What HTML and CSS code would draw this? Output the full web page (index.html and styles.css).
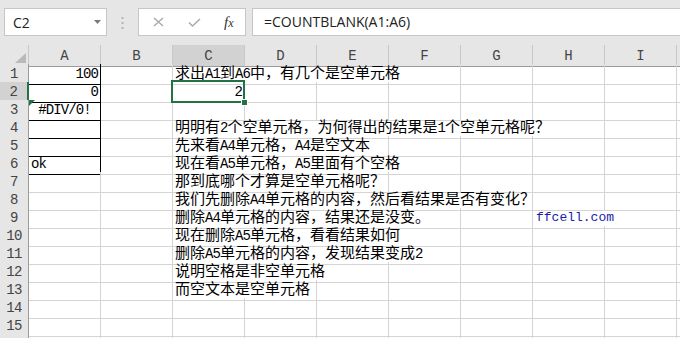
FILE: index.html
```html
<!DOCTYPE html>
<html lang="zh-CN">
<head>
<meta charset="UTF-8">
<title>COUNTBLANK</title>
<link rel="stylesheet" href="styles.css">
</head>
<body>
<div class="toolbar">
  <div class="namebox">
    <span>C2</span>
    <svg class="dd" width="7" height="4" viewBox="0 0 7 4"><path d="M0 0h7L3.5 4z"/></svg>
  </div>
  <svg class="grip" width="3" height="12" viewBox="0 0 3 12"><rect x="0.5" y="0" width="2" height="2"/><rect x="0.5" y="5" width="2" height="2"/><rect x="0.5" y="10" width="2" height="2"/></svg>
  <div class="fbtns">
    <svg class="ico" width="11" height="10" viewBox="0 0 11 10"><path d="M1 1l9 8M10 1l-9 8"/></svg>
    <svg class="ico" width="13" height="9" viewBox="0 0 13 9"><path d="M1 4.5l3.5 3.5L12 1"/></svg>
    <span class="fx">f<small>x</small></span>
  </div>
  <div class="finput">=COUNTBLANK(A1:A6)</div>
</div>

<div class="sheet">
  <div class="row head">
    <div class="corner"><svg width="11" height="10" viewBox="0 0 11 10"><path d="M11 0v10H0z"/></svg></div>
    <div>A</div><div>B</div><div class="on">C</div><div>D</div><div>E</div><div>F</div><div>G</div><div>H</div><div>I</div><div></div>
  </div>
  <div class="row">
    <div class="rh">1</div><div class="box num">100</div><div></div>
    <div class="txt span4">求出<span class="en">A1</span>到<span class="en">A6</span>中，有几个是空单元格</div>
    <div></div><div></div><div></div><div></div>
  </div>
  <div class="row">
    <div class="rh on">2</div><div class="box num">0</div><div></div>
    <div class="num sel">2</div>
    <div></div><div></div><div></div><div></div><div></div><div></div><div></div>
  </div>
  <div class="row">
    <div class="rh">3</div><div class="box err">#DIV/0!</div><div></div>
    <div></div><div></div><div></div><div></div><div></div><div></div><div></div><div></div>
  </div>
  <div class="row">
    <div class="rh">4</div><div class="box"></div><div></div>
    <div class="txt span6">明明有<span class="en">2</span>个空单元格，为何得出的结果是<span class="en">1</span>个空单元格呢？</div>
    <div></div><div></div>
  </div>
  <div class="row">
    <div class="rh">5</div><div class="box"></div><div></div>
    <div class="txt span3">先来看<span class="en">A4</span>单元格，<span class="en">A4</span>是空文本</div>
    <div></div><div></div><div></div><div></div><div></div>
  </div>
  <div class="row">
    <div class="rh">6</div><div class="box mono">ok</div><div></div>
    <div class="txt span4">现在看<span class="en">A5</span>单元格，<span class="en">A5</span>里面有个空格</div>
    <div></div><div></div><div></div><div></div>
  </div>
  <div class="row">
    <div class="rh">7</div><div></div><div></div>
    <div class="txt span3">那到底哪个才算是空单元格呢？</div>
    <div></div><div></div><div></div><div></div><div></div>
  </div>
  <div class="row">
    <div class="rh">8</div><div></div><div></div>
    <div class="txt span5">我们先删除<span class="en">A4</span>单元格的内容，然后看结果是否有变化？</div>
    <div></div><div></div><div></div>
  </div>
  <div class="row">
    <div class="rh">9</div><div></div><div></div>
    <div class="txt span4">删除<span class="en">A4</span>单元格的内容，结果还是没变。</div>
    <div></div><div class="link span2">ffcell.com</div><div></div>
  </div>
  <div class="row">
    <div class="rh">10</div><div></div><div></div>
    <div class="txt span4">现在删除<span class="en">A5</span>单元格，看看结果如何</div>
    <div></div><div></div><div></div><div></div>
  </div>
  <div class="row">
    <div class="rh">11</div><div></div><div></div>
    <div class="txt span4">删除<span class="en">A5</span>单元格的内容，发现结果变成<span class="en">2</span></div>
    <div></div><div></div><div></div><div></div>
  </div>
  <div class="row">
    <div class="rh">12</div><div></div><div></div>
    <div class="txt span3">说明空格是非空单元格</div>
    <div></div><div></div><div></div><div></div><div></div>
  </div>
  <div class="row">
    <div class="rh">13</div><div></div><div></div>
    <div class="txt span2">而空文本是空单元格</div>
    <div></div><div></div><div></div><div></div><div></div><div></div>
  </div>
  <div class="row">
    <div class="rh">14</div><div></div><div></div><div></div><div></div><div></div><div></div><div></div><div></div><div></div><div></div>
  </div>
  <div class="row">
    <div class="rh">15</div><div></div><div></div><div></div><div></div><div></div><div></div><div></div><div></div><div></div><div></div>
  </div>
  <div class="row">
    <div class="rh"></div><div></div><div></div><div></div><div></div><div></div><div></div><div></div><div></div><div></div><div></div>
  </div>
</div>
</body>
</html>
```

FILE: styles.css
```css
body {
  margin: 0;
  background: #fff;
  font-family: "Noto Sans CJK SC", sans-serif;
  overflow: hidden;
}

/* formula bar */
.toolbar {
  height: 45px;
  background: #e6e6e6;
  display: flex;
  align-items: flex-start;
  padding-top: 8px;
  box-sizing: border-box;
}
.namebox {
  margin-left: 4px;
  width: 103px;
  height: 28px;
  background: #fff;
  border: 1px solid #c6c6c6;
  box-sizing: border-box;
  display: flex;
  align-items: center;
  justify-content: space-between;
  padding: 0 5px 0 8px;
  font-family: "Open Sans", sans-serif;
  font-size: 14px;
  color: #222;
}
.dd {
  fill: #7a7a7a;
}
.grip {
  fill: #b4b4b4;
  margin: 9px 14px 0 14px;
}
.fbtns {
  width: 108px;
  height: 28px;
  background: #fff;
  border: 1px solid #c6c6c6;
  box-sizing: border-box;
  display: flex;
  align-items: center;
  padding-left: 14px;
  gap: 24px;
}
.ico {
  fill: none;
  stroke: #a8a8a8;
  stroke-width: 1.4;
}
.fx {
  font-family: "Liberation Serif", serif;
  font-style: italic;
  font-size: 15px;
  color: #333;
  margin-left: -1px;
}
.fx small {
  font-size: 12px;
}
.finput {
  flex: 1;
  margin-left: 6px;
  margin-right: -2px;
  height: 28px;
  background: #fff;
  border: 1px solid #c6c6c6;
  box-sizing: border-box;
  padding-left: 11px;
  font-family: "Open Sans", sans-serif;
  font-size: 14px;
  line-height: 25px;
  color: #222;
}

/* grid */
.row {
  display: grid;
  grid-template-columns: 29px repeat(9, 72px) 1fr;
  height: 18px;
}
.row > div {
  border-right: 1px solid #d4d4d4;
  border-bottom: 1px solid #d4d4d4;
  box-sizing: border-box;
  white-space: nowrap;
  padding: 0 2px;
  font-size: 15px;
  line-height: 16px;
  color: #000;
  position: relative;
}
.head {
  height: 19px;
}
.row.head > div {
  background: #e6e6e6;
  border-right-color: #c8c8c8;
  border-bottom-color: #9b9b9b;
  text-align: center;
  font-family: "Liberation Mono", monospace;
  font-size: 14px;
  line-height: 19px;
  padding-top: 2px;
  color: #444;
}
.row.head .on {
  background: #d2d2d2;
}
.corner svg {
  position: absolute;
  right: 2px;
  bottom: 3px;
  fill: #b9b9b9;
}
.row .rh {
  background: #e6e6e6;
  border-right-color: #9b9b9b;
  border-bottom-color: #cfcfcf;
  text-align: center;
  font-family: "Liberation Mono", monospace;
  font-size: 14px;
  line-height: 20px;
  letter-spacing: -0.6px;
  color: #444;
  padding: 0;
}
.row .rh.on {
  background: #d2d2d2;
  border-right: 2px solid #217346;
}

.span2 { grid-column: span 2; }
.span3 { grid-column: span 3; }
.span4 { grid-column: span 4; }
.span5 { grid-column: span 5; }
.span6 { grid-column: span 6; }

.en,
.row .num,
.row .err,
.row .mono {
  font-family: "Liberation Mono", monospace;
  font-size: 14px;
  letter-spacing: -0.9px;
}
.row .num,
.row .err,
.row .mono {
  line-height: 20px;
}
.num {
  text-align: right;
}
.row .box {
  border-right-color: #000;
  border-bottom-color: #000;
}
.err {
  text-align: center;
}
.err::before {
  content: "";
  position: absolute;
  left: 0;
  top: 0;
  border-top: 6px solid #217346;
  border-right: 6px solid transparent;
}

/* active cell */
.sel::after {
  content: "";
  position: absolute;
  left: -2px;
  top: -2px;
  right: -1px;
  bottom: -1px;
  border: 2px solid #217346;
  z-index: 1;
}
.sel::before {
  content: "";
  position: absolute;
  right: -3px;
  bottom: -3px;
  width: 5px;
  height: 5px;
  background: #217346;
  box-shadow: 0 0 0 1px #fff;
  z-index: 2;
}

.row .link {
  font-family: "Liberation Mono", monospace;
  font-size: 13px;
  line-height: 19px;
  color: #1c1ca8;
  padding-left: 3px;
}
```
